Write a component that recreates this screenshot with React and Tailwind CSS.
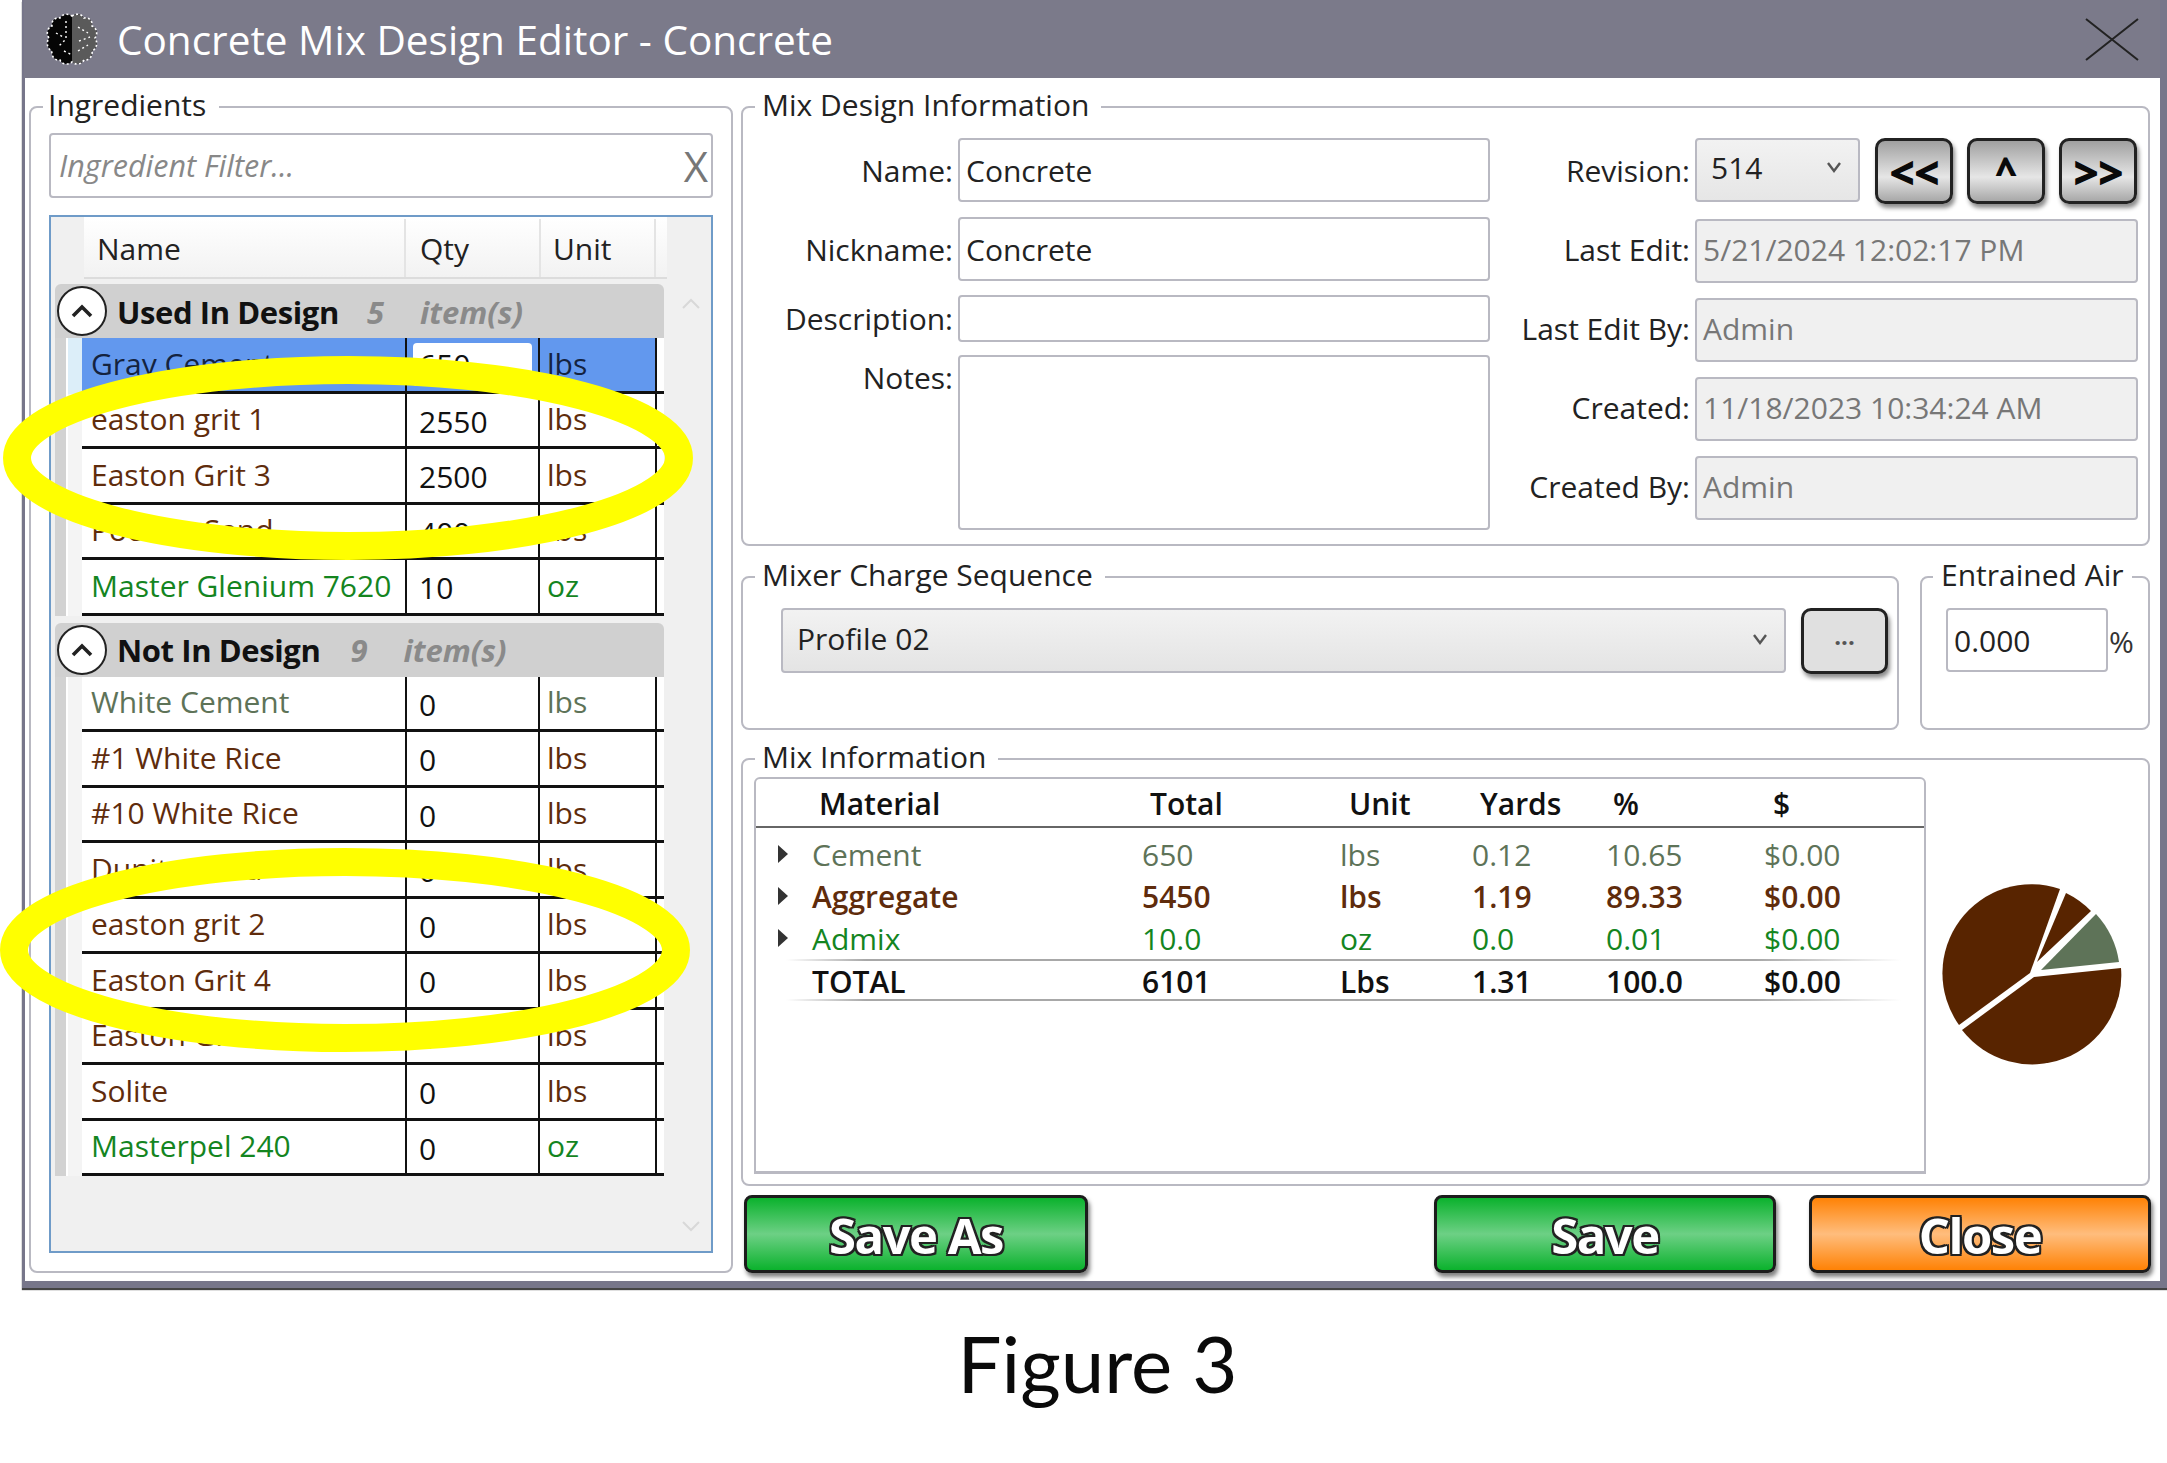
import React from "react";

const BROWN = "text-[#5f2c0c]";
const GREEN = "text-[#14851f]";
const SAGE = "text-[#5e7358]";

function Group({ title, className, legend, children }) {
  return (
    <fieldset className={`min-w-0 border-2 border-[#b9b9c2] rounded-lg ${className}`}>
      <legend className={`h-[36px] leading-[32px] text-[30px] text-[#222] ${legend}`}>{title}</legend>
      {children}
    </fieldset>
  );
}

function Chevron({ className }) {
  return (
    <svg width="16" height="12" viewBox="0 0 16 12" className={className}>
      <path d="M2 2 L8 10 L14 2" fill="none" stroke="#555" strokeWidth="2.4" />
    </svg>
  );
}

function Logo() {
  const lobes = "M26 3 C30 0 36 1 38 5 C43 4 47 8 46 13 C51 15 52 21 49 25 C52 29 51 36 46 38 C47 43 43 48 38 47 C35 52 29 52 26 49 C22 52 16 52 14 47 C9 48 5 43 6 38 C1 36 0 29 3 25 C0 21 1 15 6 13 C5 8 9 4 14 5 C16 1 22 0 26 3 Z";
  return (
    <svg width="52" height="52" viewBox="0 0 52 52" className="shrink-0">
      <path d={lobes} fill="#050505" />
      <path d="M26 3 C30 0 36 1 38 5 C43 4 47 8 46 13 C51 15 52 21 49 25 C52 29 51 36 46 38 C47 43 43 48 38 47 C35 52 29 52 26 49 Z" fill="#5a5a5a" />
      <path d={lobes} fill="none" stroke="#fff" strokeWidth="1.6" strokeDasharray="2 2.4" />
      <g fill="none" stroke="#fff" strokeWidth="1.4" strokeDasharray="2 3">
        <path d="M20 8 V26 L12 34" />
        <path d="M10 20 L17 24" />
        <path d="M18 38 L26 42" />
        <path d="M32 14 L42 20" />
        <path d="M33 28 L44 24" />
        <path d="M32 38 L42 32" />
      </g>
    </svg>
  );
}

function Cell({ name, qty, unit, color, selected }) {
  return (
    <div className="flex h-[55.5px]">
      <div className="w-[11px] shrink-0 bg-[#d2d2d2]" />
      <div className={`w-[16px] shrink-0 border-l-2 border-white ${selected ? "bg-[#dcEEf9]" : "bg-[#f4f4f4]"}`} />
      <div className={`flex w-[582px] border-b-[3px] border-[#111] ${selected ? "bg-[linear-gradient(to_right,#6298ee_573px,#fff_573px)]" : "bg-white"}`}>
        <div className={`flex w-[325px] items-center border-r-2 border-[#111] pb-[2px] pl-[9px] text-[30px] whitespace-nowrap ${selected ? "text-[#14233f]" : color}`}>{name}</div>
        {selected ? (
          <div className="w-[133px] border-r-2 border-[#111] px-[6px] pt-[5px] pb-[5px]">
            <div className="flex h-full items-center rounded-sm bg-white pl-[6px] text-[30px] text-[#111]">{qty}</div>
          </div>
        ) : (
          <div className="flex w-[133px] items-center border-r-2 border-[#111] pl-[12px] pt-[3px] text-[30px] text-[#111]">{qty}</div>
        )}
        <div className={`flex w-[117px] items-center border-r-2 border-[#111] pb-[2px] pl-[7px] text-[30px] ${selected ? "text-[#14233f]" : color}`}>{unit}</div>
      </div>
    </div>
  );
}

function GroupHead({ title, count, className, gapA, gapB }) {
  return (
    <div className={`ml-[4px] flex h-[54px] w-[609px] items-center rounded-t-md bg-[#d0d0d0] pt-[2px] ${className}`}>
      <div className="ml-[2px] -mt-[2px] flex h-[50px] w-[50px] shrink-0 items-center justify-center rounded-full border-2 border-[#222] bg-white">
        <svg width="24" height="16" viewBox="0 0 24 16">
          <path d="M3 13 L12 4 L21 13" fill="none" stroke="#222" strokeWidth="3.6" />
        </svg>
      </div>
      <span className="ml-[10px] text-[31px] font-bold text-[#111] tracking-[-0.4px]">{title}</span>
      <span className={`text-[31px] font-bold italic text-[#8a8a8a] ${gapA}`}>{count}</span>
      <span className={`text-[31px] font-bold italic text-[#8a8a8a] ${gapB}`}>item(s)</span>
    </div>
  );
}

function Ring({ className }) {
  return (
    <svg width="692" height="204" viewBox="0 0 692 204" className={`pointer-events-none absolute ${className}`}>
      <ellipse cx="346" cy="102" rx="331" ry="88" fill="none" stroke="#ffff00" strokeWidth="28" />
    </svg>
  );
}

function Field({ label, labelW, inputW, h, disabled, value, gap = "gap-[5px]", labelClass = "", children }) {
  return (
    <div className={`flex items-center ${gap}`}>
      <div className={`text-right text-[30px] text-[#222] whitespace-nowrap ${labelW} ${labelClass}`}>{label}</div>
      {children || (
        <div className={`flex items-center rounded-[4px] border-2 border-[#b9b9c2] pl-[6px] text-[30px] ${inputW} ${h} ${disabled ? "bg-[#f0f0f0] pb-[4px] text-[#777]" : "bg-white text-[#222]"}`}>{value}</div>
      )}
    </div>
  );
}

function NavButton({ children, className }) {
  return (
    <div className={`flex h-[66px] w-[78px] justify-center rounded-[10px] border-[3px] border-[#222] bg-[linear-gradient(to_bottom,#a0a0a0,#e6e6e6_60%,#a8a8a8)] font-black text-[#0a0a0a] shadow-[2px_4px_4px_rgba(0,0,0,0.45)] ${className}`}>{children}</div>
  );
}

function BigButton({ children, className }) {
  return (
    <div className={`flex h-[78px] shrink-0 items-center justify-center rounded-[8px] border-[3px] border-[#1c1c1c] pt-[4px] text-[49px] font-bold tracking-[-1.5px] text-white shadow-[2px_4px_4px_rgba(0,0,0,0.5)] [text-shadow:2px_0_0_#222,-2px_0_0_#222,0_2px_0_#222,0_-2px_0_#222,2px_2px_0_#222,-2px_-2px_0_#222,2px_-2px_0_#222,-2px_2px_0_#222] ${className}`}>{children}</div>
  );
}

function MixRow({ arrow = true, cells, className }) {
  return (
    <div className={`flex items-center text-[30px] ${className}`}>
      <div className="flex w-[56px] justify-start pl-[22px]">
        {arrow && (
          <svg width="10" height="18" viewBox="0 0 10 18">
            <path d="M0 0 L10 9 L0 18 Z" fill="#333" />
          </svg>
        )}
      </div>
      <div className="w-[330px]">{cells[0]}</div>
      <div className="w-[198px]">{cells[1]}</div>
      <div className="w-[132px]">{cells[2]}</div>
      <div className="w-[134px]">{cells[3]}</div>
      <div className="w-[158px]">{cells[4]}</div>
      <div>{cells[5]}</div>
    </div>
  );
}

function FadeLine() {
  return <div className="h-[2px] bg-[linear-gradient(to_right,transparent_30px,#a8a8a8_110px,#a8a8a8_1000px,transparent_1145px)]" />;
}

const used = [
  ["Gray Cement", "650", "lbs", SAGE, true],
  ["easton grit 1", "2550", "lbs", BROWN],
  ["Easton Grit 3", "2500", "lbs", BROWN],
  ["Pocono Sand", "400", "lbs", BROWN],
  ["Master Glenium 7620", "10", "oz", GREEN],
];
const unused = [
  ["White Cement", "0", "lbs", SAGE],
  ["#1 White Rice", "0", "lbs", BROWN],
  ["#10 White Rice", "0", "lbs", BROWN],
  ["Dunite Sand", "0", "lbs", BROWN],
  ["easton grit 2", "0", "lbs", BROWN],
  ["Easton Grit 4", "0", "lbs", BROWN],
  ["Easton Grit 5", "0", "lbs", BROWN],
  ["Solite", "0", "lbs", BROWN],
  ["Masterpel 240", "0", "oz", GREEN],
];

export default function App() {
  return (
    <div className="relative h-[1463px] w-[2167px] overflow-hidden bg-white pl-[22px] font-['Open_Sans',sans-serif]">
      <div className="h-[1288px] w-[2145px] border-r-[7px] border-b-[7px] border-l-[3px] border-[#77768a] bg-white shadow-[0_2px_1px_#444]">
        <div className="-ml-[1px] flex h-[78px] items-center bg-[#7b7a8a] pl-[22px]">
          <Logo />
          <span className="ml-[19px] pt-[3px] text-[40.5px] text-white">Concrete Mix Design Editor - Concrete</span>
          <svg width="54" height="43" viewBox="0 0 54 43" className="mr-[21px] ml-auto">
            <path d="M1 1 L53 42 M53 1 L1 42" stroke="#222" strokeWidth="2" fill="none" />
          </svg>
        </div>
        <div className="flex gap-[8px] pt-[11px] pl-[4px]">
          <Group title="Ingredients" className="h-[1184px] w-[704px] shrink-0" legend="ml-[12px] pl-[5px] pr-[13px]">
            <div className="px-[18px] pt-[8px]">
              <div className="flex h-[65px] items-center rounded-[4px] border-2 border-[#b9b9c2] bg-white pr-[3px] pl-[8px]">
                <span className="text-[30.5px] italic text-[#888]">Ingredient Filter...</span>
                <span className="ml-auto text-[42px] leading-none text-[#777]">X</span>
              </div>
              <div className="relative mt-[17px] h-[1038px] border-2 border-[#6f9bc8] bg-[#f0f0f0]">
                <div className="ml-[33px] flex h-[62px] w-[583px] items-center border-b-2 border-[#dcdcdc] bg-[linear-gradient(to_bottom,#fff,#f2f2f2)] pt-[2px] text-[30px] text-[#222]">
                  <div className="flex h-full w-[322px] items-center border-r-2 border-[#e4e4e4] pl-[13px]">Name</div>
                  <div className="flex h-full w-[135px] items-center border-r-2 border-[#e4e4e4] pl-[14px]">Qty</div>
                  <div className="flex h-full w-[115px] items-center border-r-2 border-[#e4e4e4] pl-[12px]">Unit</div>
                </div>
                <div className="pt-[5px] pl-0">
                  <GroupHead title="Used In Design" count="5" gapA="ml-[28px]" gapB="ml-[36px]" />
                  <div className="ml-[4px]">
                    {used.map((r) => (
                      <Cell key={r[0]} name={r[0]} qty={r[1]} unit={r[2]} color={r[3]} selected={r[4]} />
                    ))}
                  </div>
                  <GroupHead title="Not In Design" count="9" className="mt-[7px]" gapA="ml-[30px]" gapB="ml-[36px]" />
                  <div className="ml-[4px]">
                    {unused.map((r) => (
                      <Cell key={r[0]} name={r[0]} qty={r[1]} unit={r[2]} color={r[3]} />
                    ))}
                  </div>
                </div>
                <svg width="20" height="12" viewBox="0 0 20 12" className="absolute top-[81px] left-[630px]">
                  <path d="M2 10 L10 2 L18 10" fill="none" stroke="#d8d8d8" strokeWidth="2" />
                </svg>
                <svg width="20" height="12" viewBox="0 0 20 12" className="absolute top-[1003px] left-[630px]">
                  <path d="M2 2 L10 10 L18 2" fill="none" stroke="#d8d8d8" strokeWidth="2" />
                </svg>
              </div>
            </div>
          </Group>

          <div className="w-[1409px] shrink-0">
            <Group title="Mix Design Information" className="h-[457px]" legend="ml-[12px] pl-[7px] pr-[12px]">
              <div className="flex pt-[13px]">
                <div className="flex flex-col">
                  <Field label="Name:" labelW="w-[210px]" inputW="w-[532px]" h="h-[64px]" value="Concrete" />
                  <div className="mt-[15px]">
                    <Field label="Nickname:" labelW="w-[210px]" inputW="w-[532px]" h="h-[64px]" value="Concrete" />
                  </div>
                  <div className="mt-[14px]">
                    <Field label="Description:" labelW="w-[210px]" inputW="w-[532px]" h="h-[47px]" value="" />
                  </div>
                  <div className="mt-[13px] flex items-start gap-[5px]">
                    <div className="w-[210px] text-right text-[30px] text-[#222]">Notes:</div>
                    <div className="h-[175px] w-[532px] rounded-[4px] border-2 border-[#b9b9c2] bg-white" />
                  </div>
                </div>
                <div className="ml-[4px] flex flex-col gap-[15px]">
                  <Field label="Revision:" labelW="w-[196px]" gap="gap-[5px]" labelClass="pb-[2px]">
                    <div className="flex items-start gap-[15px]">
                      <div className="flex h-[64px] w-[165px] items-center rounded-[4px] border-2 border-[#b9b9c2] bg-[linear-gradient(to_bottom,#f2f2f2,#e6e6e6)] pr-[16px] pl-[14px] text-[30px] text-[#222]">
                        <span className="-mt-[6px]">514</span>
                        <Chevron className="-mt-[6px] ml-auto" />
                      </div>
                      <div className="flex gap-[14px]">
                        <NavButton className="items-center pt-[2px] text-[44px] leading-none tracking-[-1px]">&lt;&lt;</NavButton>
                        <NavButton className="items-start pt-[11px] text-[38px] leading-none">^</NavButton>
                        <NavButton className="items-center pt-[2px] text-[44px] leading-none tracking-[-1px]">&gt;&gt;</NavButton>
                      </div>
                    </div>
                  </Field>
                  <Field label="Last Edit:" labelW="w-[196px]" labelClass="pb-[3px]" inputW="w-[443px]" h="h-[64px]" disabled value="5/21/2024 12:02:17 PM" />
                  <Field label="Last Edit By:" labelW="w-[196px]" labelClass="pb-[3px]" inputW="w-[443px]" h="h-[64px]" disabled value="Admin" />
                  <Field label="Created:" labelW="w-[196px]" labelClass="pb-[3px]" inputW="w-[443px]" h="h-[64px]" disabled value="11/18/2023 10:34:24 AM" />
                  <Field label="Created By:" labelW="w-[196px]" labelClass="pb-[3px]" inputW="w-[443px]" h="h-[64px]" disabled value="Admin" />
                </div>
              </div>
            </Group>

            <div className="mt-[13px] flex gap-[21px]">
              <Group title="Mixer Charge Sequence" className="h-[171px] w-[1158px]" legend="ml-[12px] pl-[7px] pr-[12px]">
                <div className="flex gap-[15px] pt-[13px] pl-[38px]">
                  <div className="flex h-[65px] w-[1005px] items-center rounded-[4px] border-2 border-[#b9b9c2] bg-[linear-gradient(to_bottom,#f2f2f2,#e4e4e4)] pr-[16px] pl-[14px] text-[30px] text-[#222]">
                    <span className="-mt-[4px]">Profile 02</span>
                    <Chevron className="-mt-[4px] ml-auto" />
                  </div>
                  <div className="flex h-[66px] w-[87px] items-center justify-center rounded-[10px] border-[3px] border-[#222] bg-[#e0e0e0] pb-[10px] text-[24px] leading-none font-bold text-[#555] shadow-[2px_4px_4px_rgba(0,0,0,0.45)]">...</div>
                </div>
              </Group>
              <Group title="Entrained Air" className="h-[171px] w-[230px]" legend="ml-[11px] pl-[8px] pr-[9px] whitespace-nowrap">
                <div className="flex pt-[13px] pl-[24px]">
                  <div className="flex h-[64px] w-[162px] items-center rounded-[4px] border-2 border-[#b9b9c2] bg-white pl-[6px] text-[30px] text-[#222]">0.000</div>
                  <span className="pt-[11px] pl-[1px] text-[30px] tracking-[-1px] text-[#333]">%</span>
                </div>
              </Group>
            </div>

            <Group title="Mix Information" className="mt-[11px] h-[445px]" legend="ml-[12px] pl-[7px] pr-[12px]">
              <div className="flex pl-[11px]">
                <div className="h-[397px] w-[1172px] shrink-0 rounded-t-md border-2 border-b-[3px] border-[#b9b9c2] bg-white">
                  <div className="flex h-[49px] items-center border-b-2 border-[#666] pt-[2px] text-[30px] font-semibold text-[#111]">
                    <div className="w-[394px] pl-[63px]">Material</div>
                    <div className="w-[199px]">Total</div>
                    <div className="w-[131px]">Unit</div>
                    <div className="w-[133px]">Yards</div>
                    <div className="w-[160px]">%</div>
                    <div>$</div>
                  </div>
                  <div className="pt-[5px]">
                    <MixRow className={`h-[42px] ${SAGE}`} cells={["Cement", "650", "lbs", "0.12", "10.65", "$0.00"]} />
                    <MixRow className={`h-[42px] font-semibold ${BROWN}`} cells={["Aggregate", "5450", "lbs", "1.19", "89.33", "$0.00"]} />
                    <MixRow className={`h-[42px] ${GREEN}`} cells={["Admix", "10.0", "oz", "0.0", "0.01", "$0.00"]} />
                    <FadeLine />
                    <MixRow arrow={false} className="h-[38px] pt-[3px] font-semibold text-[#111]" cells={["TOTAL", "6101", "Lbs", "1.31", "100.0", "$0.00"]} />
                    <FadeLine />
                  </div>
                </div>
                <svg width="190" height="194" viewBox="1938 878 190 194" className="mt-[102px] ml-[11px] shrink-0">
                  <path d="M2061 888 A89 89 0 0 0 1960 1024 L2031 972 Z" fill="#582400" />
                  <path d="M2067 892 A90 90 0 0 1 2092 910 L2038 961 Z" fill="#582400" />
                  <path d="M2097 913 A90 90 0 0 1 2120 961 L2042 969 Z" fill="#5e7358" />
                  <path d="M2122 967 A89 89 0 0 1 1963 1029 L2035 976 Z" fill="#582400" />
                </svg>
              </div>
            </Group>

            <div className="mt-[9px] flex pl-[3px]">
              <BigButton className="w-[344px] bg-[linear-gradient(to_bottom,#0bb22d,#6dd085_50%,#0bb22d)]">Save As</BigButton>
              <BigButton className="ml-[346px] w-[342px] bg-[linear-gradient(to_bottom,#0bb22d,#6dd085_50%,#0bb22d)]">Save</BigButton>
              <BigButton className="ml-[33px] w-[342px] bg-[linear-gradient(to_bottom,#ff8205,#ffbd7d_50%,#ff8205)]">Close</BigButton>
            </div>
          </div>
        </div>
      </div>

      <Ring className="top-[356px] left-[2px]" />
      <Ring className="top-[848px] left-[-1px]" />

      <div className="pt-[30px] pl-[6px] text-center font-['Lato',sans-serif] text-[78px] leading-[90px] text-[#0a0a0a]">Figure 3</div>
    </div>
  );
}
